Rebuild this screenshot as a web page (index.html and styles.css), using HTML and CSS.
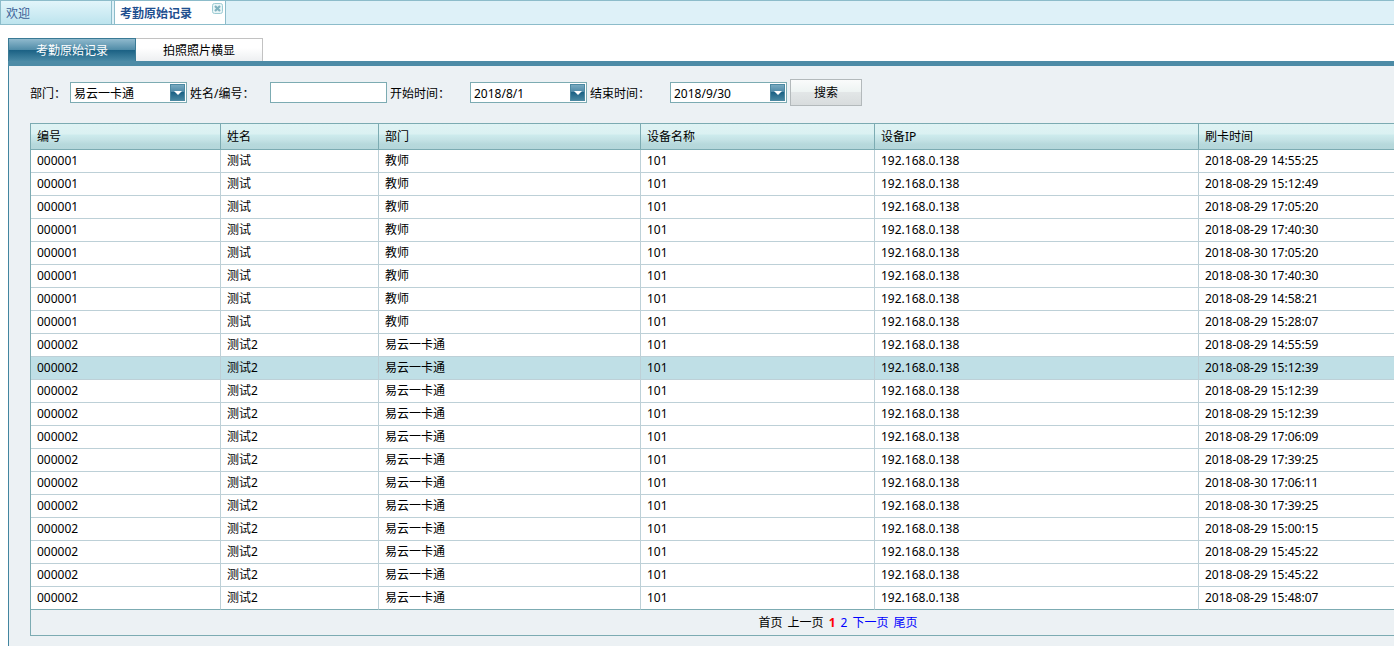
FILE: index.html
```html
<!DOCTYPE html>
<html lang="zh-CN">
<head>
<meta charset="utf-8">
<title>考勤原始记录</title>
<link rel="stylesheet" href="styles.css">
</head>
<body>
<nav class="window-tabs">
  <button class="window-tab" type="button">欢迎</button>
  <div class="window-tab window-tab-active">
    <span>考勤原始记录</span>
    <button class="close" type="button" aria-label="关闭">
      <svg width="11" height="11" viewBox="0 0 11 11"><rect x=".5" y=".5" width="10" height="10" rx="2" fill="#e8f5f7" stroke="#9ccbd3"/><path d="M3 3l5 5M8 3l-5 5" stroke="#7fb2bf" stroke-width="2.2"/></svg>
    </button>
  </div>
</nav>
<main class="content">
  <div class="page-tabs">
    <button class="page-tab page-tab-active" type="button">考勤原始记录</button>
    <button class="page-tab" type="button">拍照照片横显</button>
  </div>
  <section class="panel">
    <form class="search">
      <label class="label-short" for="dept">部门：</label>
      <div class="field">
        <select id="dept"><option>易云一卡通</option></select>
        <span class="arrow"><svg width="8" height="4" viewBox="0 0 8 4"><path d="M0 0h8L4 4z" fill="#fff"/></svg></span>
      </div>
      <label for="person">姓名/编号：</label>
      <div class="field"><input id="person" type="text"></div>
      <label for="start">开始时间：</label>
      <div class="field">
        <input id="start" type="text" value="2018/8/1">
        <button class="arrow" type="button" aria-label="选择开始时间"><svg width="8" height="4" viewBox="0 0 8 4"><path d="M0 0h8L4 4z" fill="#fff"/></svg></button>
      </div>
      <label for="end">结束时间：</label>
      <div class="field">
        <input id="end" type="text" value="2018/9/30">
        <button class="arrow" type="button" aria-label="选择结束时间"><svg width="8" height="4" viewBox="0 0 8 4"><path d="M0 0h8L4 4z" fill="#fff"/></svg></button>
      </div>
      <button class="submit" type="submit">搜索</button>
    </form>
    <div class="grid">
      <table class="records">
        <colgroup><col class="col-id"><col class="col-name"><col class="col-dept"><col class="col-device"><col class="col-ip"><col></colgroup>
        <thead>
          <tr><th>编号</th><th>姓名</th><th>部门</th><th>设备名称</th><th>设备IP</th><th>刷卡时间</th></tr>
        </thead>
        <tbody>
          <tr><td>000001</td><td>测试</td><td>教师</td><td>101</td><td>192.168.0.138</td><td>2018-08-29 14:55:25</td></tr>
          <tr><td>000001</td><td>测试</td><td>教师</td><td>101</td><td>192.168.0.138</td><td>2018-08-29 15:12:49</td></tr>
          <tr><td>000001</td><td>测试</td><td>教师</td><td>101</td><td>192.168.0.138</td><td>2018-08-29 17:05:20</td></tr>
          <tr><td>000001</td><td>测试</td><td>教师</td><td>101</td><td>192.168.0.138</td><td>2018-08-29 17:40:30</td></tr>
          <tr><td>000001</td><td>测试</td><td>教师</td><td>101</td><td>192.168.0.138</td><td>2018-08-30 17:05:20</td></tr>
          <tr><td>000001</td><td>测试</td><td>教师</td><td>101</td><td>192.168.0.138</td><td>2018-08-30 17:40:30</td></tr>
          <tr><td>000001</td><td>测试</td><td>教师</td><td>101</td><td>192.168.0.138</td><td>2018-08-29 14:58:21</td></tr>
          <tr><td>000001</td><td>测试</td><td>教师</td><td>101</td><td>192.168.0.138</td><td>2018-08-29 15:28:07</td></tr>
          <tr><td>000002</td><td>测试2</td><td>易云一卡通</td><td>101</td><td>192.168.0.138</td><td>2018-08-29 14:55:59</td></tr>
          <tr class="selected"><td>000002</td><td>测试2</td><td>易云一卡通</td><td>101</td><td>192.168.0.138</td><td>2018-08-29 15:12:39</td></tr>
          <tr><td>000002</td><td>测试2</td><td>易云一卡通</td><td>101</td><td>192.168.0.138</td><td>2018-08-29 15:12:39</td></tr>
          <tr><td>000002</td><td>测试2</td><td>易云一卡通</td><td>101</td><td>192.168.0.138</td><td>2018-08-29 15:12:39</td></tr>
          <tr><td>000002</td><td>测试2</td><td>易云一卡通</td><td>101</td><td>192.168.0.138</td><td>2018-08-29 17:06:09</td></tr>
          <tr><td>000002</td><td>测试2</td><td>易云一卡通</td><td>101</td><td>192.168.0.138</td><td>2018-08-29 17:39:25</td></tr>
          <tr><td>000002</td><td>测试2</td><td>易云一卡通</td><td>101</td><td>192.168.0.138</td><td>2018-08-30 17:06:11</td></tr>
          <tr><td>000002</td><td>测试2</td><td>易云一卡通</td><td>101</td><td>192.168.0.138</td><td>2018-08-30 17:39:25</td></tr>
          <tr><td>000002</td><td>测试2</td><td>易云一卡通</td><td>101</td><td>192.168.0.138</td><td>2018-08-29 15:00:15</td></tr>
          <tr><td>000002</td><td>测试2</td><td>易云一卡通</td><td>101</td><td>192.168.0.138</td><td>2018-08-29 15:45:22</td></tr>
          <tr><td>000002</td><td>测试2</td><td>易云一卡通</td><td>101</td><td>192.168.0.138</td><td>2018-08-29 15:45:22</td></tr>
          <tr><td>000002</td><td>测试2</td><td>易云一卡通</td><td>101</td><td>192.168.0.138</td><td>2018-08-29 15:48:07</td></tr>
        </tbody>
      </table>
      <nav class="pager">
        <span>首页</span>
        <span>上一页</span>
        <strong>1</strong>
        <a href="#page2">2</a>
        <a href="#next">下一页</a>
        <a href="#last">尾页</a>
      </nav>
    </div>
  </section>
</main>
</body>
</html>
```
FILE: styles.css
```css
* { box-sizing: border-box; }

body {
  margin: 0;
  min-height: 100vh;
  display: flex;
  flex-direction: column;
  background: #fff;
  color: #000;
  font: 12px/16px "Noto Sans", "Noto Sans CJK SC", sans-serif;
}

button, input, select {
  margin: 0;
  padding: 0;
  border: 0;
  border-radius: 0;
  font: inherit;
  color: inherit;
}

.window-tabs {
  display: flex;
  gap: 2px;
  height: 25px;
  border: solid #8cbcca;
  border-width: 1px 0;
  background: #def1f8;
}

.window-tab {
  display: flex;
  align-items: center;
  width: 112px;
  padding: 2px 0 0 5px;
  border: solid #8cbcca;
  border-width: 0 1px;
  background: linear-gradient(#e2f5fa, #bde4ee);
  color: #3c5f96;
}

.window-tab-active {
  justify-content: space-between;
  background: #fff;
  color: #1f4f8f;
  font-weight: 700;
}

.close {
  align-self: flex-start;
  display: flex;
  padding-right: 2px;
  background: none;
}

.content {
  flex: 1;
  display: flex;
  flex-direction: column;
  padding: 13px 0 0 8px;
}

.page-tabs {
  display: flex;
  height: 28px;
  border-bottom: 5px solid #4d8ba6;
}

.page-tab {
  width: 127px;
  padding-top: 1px;
  border: solid #c2c2c2;
  border-width: 1px 1px 0 0;
  background: linear-gradient(#fff 40%, #edeff1);
}

.page-tab-active {
  width: 128px;
  border-color: #3a7a95;
  border-left-width: 1px;
  background: linear-gradient(#8fb9cd, #4f8ba7 50%, #1c6285 52%, #4989a5);
  color: #fff;
}

.panel {
  flex: 1;
  overflow: hidden;
  padding: 13px 0 10px 21px;
  border-left: 1px solid #4285a0;
  background: #ecf1f4;
}

.search {
  display: flex;
  align-items: center;
  height: 27px;
}

.search label {
  width: 80px;
  padding-top: 2px;
}

.search .label-short {
  width: 40px;
}

.field {
  display: flex;
  width: 117px;
  height: 21px;
  margin-right: 3px;
  padding: 1px;
  border: 1px solid #7cabb2;
  background: #fff;
}

.field input, .field select {
  flex: 1;
  min-width: 0;
  padding: 2px 0 0 2px;
  appearance: none;
  background: none;
  outline: none;
}

.arrow {
  display: flex;
  justify-content: center;
  width: 15px;
  padding-top: 6px;
  border: 1px solid #4c89a2;
  background: linear-gradient(#78a9c0, #4c88a5 48%, #1c6285 50%, #4585a0);
}

.submit {
  width: 72px;
  height: 27px;
  border: 1px solid #b3b9bb;
  background: linear-gradient(#fafbfb, #edf3f2 48%, #e2e6e7 50%, #d8dcdd);
}

.grid {
  min-width: 1616px;
  margin-top: 17px;
  border: 1px solid #7cabb2;
}

.records {
  width: 100%;
  table-layout: fixed;
  border-spacing: 0;
  background: #fff;
}

.col-id { width: 190px; }
.col-name { width: 158px; }
.col-dept { width: 262px; }
.col-device { width: 234px; }
.col-ip { width: 324px; }

.records th {
  height: 26px;
  padding: 0 6px;
  border: solid #7cabb2;
  border-width: 0 1px 1px 0;
  background: linear-gradient(#dff3f4, #dbf1f2 40%, #cdebed 44%, #c4e2e5 64%, #b7d9dc 80%, #b4d6da);
  font-weight: 400;
  text-align: left;
}

.records td {
  height: 23px;
  padding: 0 6px;
  border: solid #bdd0d7;
  border-width: 0 1px 1px 0;
}

.records th:last-child, .records td:last-child {
  border-right-width: 0;
}

.records tr:last-child td {
  border-bottom-color: #7cabb2;
}

.records .selected td {
  background: #bfdfe6;
}

.pager {
  display: flex;
  align-items: center;
  justify-content: center;
  gap: 5px;
  height: 25px;
}

.pager strong {
  color: #f00;
}

.pager a {
  color: #00f;
  text-decoration: none;
}
```
